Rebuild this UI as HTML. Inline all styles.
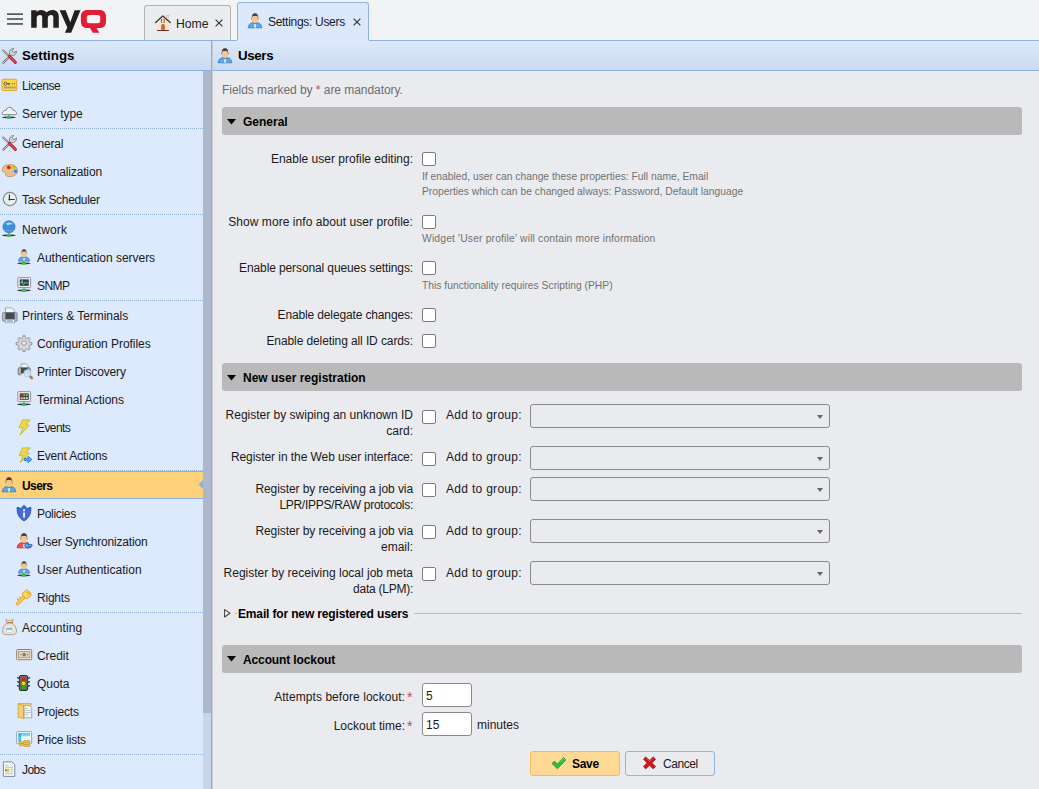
<!DOCTYPE html><html><head><meta charset="utf-8"><style>
*{box-sizing:border-box}
html,body{margin:0;padding:0}
body{width:1039px;height:789px;overflow:hidden;position:relative;background:#f2f3f5;font-family:"Liberation Sans",sans-serif;font-size:12px;color:#1a1a1a}
.a{position:absolute}
.t{position:absolute;white-space:nowrap;line-height:16px;font-size:12px}
.r{position:absolute;white-space:nowrap;line-height:16px;font-size:12px;text-align:right}
svg{position:absolute;overflow:visible}
.tab{position:absolute;border:1px solid #b3b3b3;border-bottom:none;border-radius:3px 3px 0 0}
.dot{position:absolute;left:0;width:203px;height:1px;background:repeating-linear-gradient(to right,#8db1e4 0 1px,transparent 1px 2px)}
.sec{position:absolute;left:222px;width:800px;height:28px;background:#b9b9b9;border-radius:3px}
.help{position:absolute;white-space:nowrap;line-height:15px;font-size:10.3px;color:#727272}
.cb{position:absolute;left:422px;width:14px;height:14px;background:#fff;border:1px solid #7b7b7b;border-radius:2px}
.sel{position:absolute;left:530px;width:300px;height:24px;border:1px solid #8a8a8a;border-radius:3px}
.sel:after{content:"";position:absolute;right:6px;top:10px;border-left:3.5px solid transparent;border-right:3.5px solid transparent;border-top:4px solid #666}
.inp{position:absolute;left:422px;width:50px;height:24px;background:#fff;border:1px solid #8a8a8a;border-radius:3px}
.ast{color:#c2455e}
</style></head><body>
<div class="a" style="left:0;top:0;width:1039px;height:40px;background:#f2f3f5"></div>
<svg width="16" height="12" viewBox="0 0 16 12" style="left:7px;top:13px"><rect x="0" y="0.3" width="16" height="1.7" fill="#575757"/><rect x="0" y="5.2" width="16" height="1.7" fill="#575757"/><rect x="0" y="10.1" width="16" height="1.7" fill="#575757"/></svg>
<svg width="120" height="40" viewBox="0 0 120 40" style="left:0px;top:0px"><path d="M31.2,27.7 V10.3 H36.6 V12.1 C37.6,10.6 39.3,9.9 41.2,9.9 C43.6,9.9 45.4,10.9 46.6,12.6 C47.9,10.8 50,9.9 52.4,9.9 C56.5,9.9 58.8,12.2 58.8,16.6 V27.7 H53.3 V17.3 C53.3,15.6 52.6,14.9 51.1,14.9 C49.3,14.9 47.8,16 47.8,18.2 V27.7 H42.2 V17.3 C42.2,15.6 41.5,14.9 40,14.9 C38.2,14.9 36.7,16 36.7,18.2 V27.7 Z" fill="#231f20"/><path d="M59.6,10.3 H65.7 L70.3,22.2 L74.6,10.3 H80.5 L71.2,32.8 H64.9 L67.3,27.6 Z" fill="#231f20"/><path fill-rule="evenodd" d="M87.5,9.9 H99.4 C103.6,9.9 106,12.3 106,16.5 V21.4 C106,25.6 103.6,28 99.4,28 H96.5 L99.4,32.8 H92.8 L90,28 H87.5 C83.3,28 80.9,25.6 80.9,21.4 V16.5 C80.9,12.3 83.3,9.9 87.5,9.9 Z M89.3,15 C87.6,15 86.8,15.8 86.8,17.5 V20.8 C86.8,22.5 87.6,23.3 89.3,23.3 H97.7 C99.4,23.3 100.2,22.5 100.2,20.8 V17.5 C100.2,15.8 99.4,15 97.7,15 Z" fill="#e31d36"/></svg>
<div class="tab" style="left:144px;top:5px;width:87px;height:36px;background:#ebecf0"></div>
<svg width="16" height="16" viewBox="0 0 16 16" style="left:155px;top:15px"><rect x="11.3" y="0.4" width="2.5" height="5" fill="#efe0cc" stroke="#c8b8a0" stroke-width="0.4"/><path d="M2.1,7.2 L7.8,1.8 L14,7.2 V15.4 H2.1 Z" fill="#f6e7d3"/><path d="M0.6,7.6 L7.8,0.9 L15.2,7.6" fill="none" stroke="#4a3434" stroke-width="1.3" stroke-linejoin="round" stroke-linecap="round"/><rect x="5.9" y="4" width="4" height="3.8" fill="#b86a2c"/><rect x="7" y="4.3" width="1.8" height="3.2" fill="#cfe8fa"/><path d="M6.1,15.4 V10.6 C6.1,8.6 9.9,8.6 9.9,10.6 V15.4 Z" fill="#c8783a"/><circle cx="9" cy="12.6" r="0.5" fill="#5a2a10"/><rect x="2.1" y="15" width="11.9" height="1" fill="#7a2a2a"/></svg>
<div class="t" style="left:176px;top:16px;font-size:12.2px;color:#1a1a1a">Home</div>
<svg width="8" height="8" viewBox="0 0 8 8" style="left:215px;top:19px"><path d="M0.6,0.6 L7.4,7.4 M7.4,0.6 L0.6,7.4" stroke="#3a3a3a" stroke-width="1.25"/></svg>
<div class="tab" style="left:237px;top:2px;width:132px;height:39px;background:#dce8fb;border-color:#8eb2e4;z-index:3"></div>
<svg width="16" height="16" viewBox="0 0 16 16" style="left:247px;top:13px;z-index:4"><path d="M1.2,14.8 C1.2,11.8 3,10.2 5.8,9.5 L8,10.8 L10.2,9.5 C13,10.2 14.8,11.8 14.8,14.8 Z" fill="#62a6e2" stroke="#3a78bc" stroke-width="0.8"/><path d="M6.6,8.2 L8,10.6 L9.4,8.2 Z" fill="#d9964f"/><rect x="7.3" y="11.2" width="1.5" height="3.4" fill="#fff"/><circle cx="4.9" cy="5.9" r="0.9" fill="#dca06a"/><circle cx="11.1" cy="5.9" r="0.9" fill="#dca06a"/><ellipse cx="8" cy="5.8" rx="3.0" ry="3.9" fill="#f3c690"/><path d="M4.9,6.2 C4.3,2 5.8,0.2 8,0.2 C10.2,0.2 11.7,2 11.1,6.2 C10.9,4.4 10.4,3 9.6,2.8 C8.8,3.2 7,3.2 6.4,2.8 C5.6,3 5.1,4.4 4.9,6.2 Z" fill="#4b3a35"/></svg>
<div class="t" style="left:268px;top:14px;color:#1a1a1a;z-index:4;letter-spacing:-0.3px">Settings: Users</div>
<svg width="8" height="8" viewBox="0 0 8 8" style="left:353px;top:18px;z-index:4"><path d="M0.6,0.6 L7.4,7.4 M7.4,0.6 L0.6,7.4" stroke="#3a3a3a" stroke-width="1.25"/></svg>
<div class="a" style="left:0;top:40px;width:1039px;height:31px;border-top:1px solid #8ab0e6;border-bottom:1px solid #8ab0e6;background:linear-gradient(#dde9fb,#c9daf2);z-index:2"></div>
<div class="a" style="left:237px;top:40px;width:132px;height:1px;background:#dde9fb;z-index:3"></div>
<div class="a" style="left:238px;top:40px;width:130px;height:1px;background:#dde9fb;z-index:3"></div>
<svg width="16" height="16" viewBox="0 0 16 16" style="left:1px;top:48px;z-index:4"><path d="M2.2,2.6 L8.6,8.8" stroke="#7a7a7a" stroke-width="2.1" stroke-linecap="round"/><path d="M2.2,2.6 L8.6,8.8" stroke="#e6e6e6" stroke-width="0.8" stroke-linecap="round" stroke-dasharray="0.8 0.8"/><path d="M2.4,14.6 L10,7" stroke="#7a7a7a" stroke-width="2.2" stroke-linecap="round"/><path d="M2.4,14.6 L10,7" stroke="#e6e6e6" stroke-width="0.8" stroke-linecap="round" stroke-dasharray="0.8 0.8"/><path d="M9,7.2 C7.6,4.6 9,0.4 12.6,0.5 L11,2.8 L12.8,4.8 L15.4,2.9 C15.8,6.6 12.2,8.6 9,7.2 Z" fill="#d4d4d4" stroke="#7a7a7a" stroke-width="0.9"/><path d="M8.4,8.4 L14.4,14.4" stroke="#b0202a" stroke-width="2.9" stroke-linecap="round"/><path d="M8.4,8.4 L14.4,14.4" stroke="#e8505a" stroke-width="1.3" stroke-linecap="round"/></svg>
<div class="t" style="left:22px;top:48px;font-size:13.3px;font-weight:bold;color:#000;z-index:4">Settings</div>
<svg width="16" height="16" viewBox="0 0 16 16" style="left:217px;top:48px;z-index:4"><path d="M1.2,14.8 C1.2,11.8 3,10.2 5.8,9.5 L8,10.8 L10.2,9.5 C13,10.2 14.8,11.8 14.8,14.8 Z" fill="#62a6e2" stroke="#3a78bc" stroke-width="0.8"/><path d="M6.6,8.2 L8,10.6 L9.4,8.2 Z" fill="#d9964f"/><rect x="7.3" y="11.2" width="1.5" height="3.4" fill="#fff"/><circle cx="4.9" cy="5.9" r="0.9" fill="#dca06a"/><circle cx="11.1" cy="5.9" r="0.9" fill="#dca06a"/><ellipse cx="8" cy="5.8" rx="3.0" ry="3.9" fill="#f3c690"/><path d="M4.9,6.2 C4.3,2 5.8,0.2 8,0.2 C10.2,0.2 11.7,2 11.1,6.2 C10.9,4.4 10.4,3 9.6,2.8 C8.8,3.2 7,3.2 6.4,2.8 C5.6,3 5.1,4.4 4.9,6.2 Z" fill="#4b3a35"/></svg>
<div class="t" style="left:238px;top:48px;font-size:13.3px;font-weight:bold;color:#000;z-index:4;letter-spacing:-0.35px">Users</div>
<div class="a" style="left:211px;top:40px;width:1px;height:749px;background:#8ab0e6;z-index:5"></div>
<div class="a" style="left:212px;top:41px;width:1px;height:748px;background:#c9cbd0;z-index:5"></div>
<div class="a" style="left:0;top:71px;width:211px;height:718px;background:#dde9fc"></div>
<div class="a" style="left:203px;top:71px;width:8px;height:718px;background:#c8d6ea"></div>
<div class="a" style="left:203px;top:71px;width:8px;height:642px;background:#adb8ca"></div>
<svg width="16" height="16" viewBox="0 0 16 16" style="left:1px;top:77px"><rect x="1.0" y="2.2" width="14.8" height="11.4" rx="1.2" fill="#fcd83e" stroke="#e09e26" stroke-width="0.9"/><circle cx="4.5" cy="6.7" r="1.5" fill="none" stroke="#5a5a5a" stroke-width="1"/><rect x="5.8" y="6.2" width="3.4" height="1" fill="#5a5a5a"/><rect x="7.4" y="6.2" width="1" height="2" fill="#5a5a5a"/><rect x="11" y="6.2" width="1.1" height="1.1" fill="#666"/><rect x="13" y="6.2" width="1.1" height="1.1" fill="#666"/><path d="M3.3,9.6 h1v1.8h-1z M5.4,9.6 h1v1.8h-1z M7.4,9.6 h1v1.8h-1z M9.4,9.6 h1v1.8h-1z M11.4,9.6 h1v1.8h-1z M13.3,9.6 h1v1.8h-1z" fill="#707070"/></svg>
<div class="t" style="left:22px;top:78px;color:#1a1a1a;letter-spacing:-0.44px">License</div>
<svg width="16" height="16" viewBox="0 0 16 16" style="left:1px;top:105px"><path d="M2.4,9.7 C1,9.7 0.6,7.4 2.2,6.8 C2.6,5.6 3.8,5.2 5,5.6 C5.5,3.2 7,2.2 8.8,2.3 C10.6,2.5 11.6,3.8 11.8,5.1 C13,5 14.6,5.8 14.9,7.2 C16,7.6 16,9.7 14.6,9.7 Z" fill="#f3f2f7" stroke="#7f7f94" stroke-width="1"/><ellipse cx="7.9" cy="12.4" rx="6.8" ry="0.9" fill="#1e1e1e" opacity="0.9"/><rect x="7.300000000000001" y="9.8" width="1.2" height="2.2" fill="#777"/><ellipse cx="7.9" cy="12.4" rx="2.1" ry="1.5" fill="#2fc43e"/></svg>
<div class="t" style="left:22px;top:106px;color:#1a1a1a;letter-spacing:-0.07px">Server type</div>
<div class="dot" style="top:128px"></div>
<svg width="16" height="16" viewBox="0 0 16 16" style="left:1px;top:135px"><path d="M2.2,2.6 L8.6,8.8" stroke="#7a7a7a" stroke-width="2.1" stroke-linecap="round"/><path d="M2.2,2.6 L8.6,8.8" stroke="#e6e6e6" stroke-width="0.8" stroke-linecap="round" stroke-dasharray="0.8 0.8"/><path d="M2.4,14.6 L10,7" stroke="#7a7a7a" stroke-width="2.2" stroke-linecap="round"/><path d="M2.4,14.6 L10,7" stroke="#e6e6e6" stroke-width="0.8" stroke-linecap="round" stroke-dasharray="0.8 0.8"/><path d="M9,7.2 C7.6,4.6 9,0.4 12.6,0.5 L11,2.8 L12.8,4.8 L15.4,2.9 C15.8,6.6 12.2,8.6 9,7.2 Z" fill="#d4d4d4" stroke="#7a7a7a" stroke-width="0.9"/><path d="M8.4,8.4 L14.4,14.4" stroke="#b0202a" stroke-width="2.9" stroke-linecap="round"/><path d="M8.4,8.4 L14.4,14.4" stroke="#e8505a" stroke-width="1.3" stroke-linecap="round"/></svg>
<div class="t" style="left:22px;top:136px;color:#1a1a1a;letter-spacing:-0.21px">General</div>
<svg width="16" height="16" viewBox="0 0 16 16" style="left:1px;top:163px"><path d="M1.3,6.4 C1.3,3 5,1.6 9,1.6 C13.2,1.6 16.2,3.6 16.2,7.6 C16.2,11.2 13.6,13.6 8.6,13.6 C5.6,13.6 4.2,12.6 4.6,10.6 C4.9,9.2 4,8.8 3,9 C1.8,9.2 1.3,8.2 1.3,6.4 Z" fill="#ebc088" stroke="#bd8a52" stroke-width="0.8"/><circle cx="7.8" cy="4.4" r="1.9" fill="#d8232c"/><circle cx="12.8" cy="4.3" r="1.9" fill="#c7bb26"/><circle cx="14.6" cy="8.2" r="1.8" fill="#3b86d6"/><circle cx="9.6" cy="10.4" r="0.9" fill="#f4f8ff" stroke="#b8895a" stroke-width="0.5"/></svg>
<div class="t" style="left:22px;top:164px;color:#1a1a1a;letter-spacing:-0.14px">Personalization</div>
<svg width="16" height="16" viewBox="0 0 16 16" style="left:1px;top:191px"><circle cx="8.9" cy="8" r="6.6" fill="#e8f1ef" stroke="#858890" stroke-width="1.2"/><path d="M8.4,3.4 V8.5 H13.6" fill="none" stroke="#2e2e2e" stroke-width="1.1"/><circle cx="8.4" cy="8.5" r="0.9" fill="#2e2e2e"/></svg>
<div class="t" style="left:22px;top:192px;color:#1a1a1a;letter-spacing:-0.32px">Task Scheduler</div>
<div class="dot" style="top:214px"></div>
<svg width="16" height="16" viewBox="0 0 16 16" style="left:1px;top:221px"><circle cx="8" cy="5.8" r="6" fill="#3d8fdc" stroke="#2c6dba" stroke-width="0.7"/><path d="M4.8,2.3 C7,0.8 10.2,1.2 12,3 C10.3,3.6 8.2,3.2 6.5,4.2 Z" fill="#b8e8fb" opacity="0.9"/><path d="M3,8.2 C5,10.8 11,10.8 13,8.2 C11,9.6 5,9.6 3,8.2 Z" fill="#7ac0f4" opacity="0.6"/><ellipse cx="7.9" cy="14.4" rx="6.8" ry="0.9" fill="#1e1e1e" opacity="0.9"/><rect x="7.300000000000001" y="11.8" width="1.2" height="2.2" fill="#777"/><ellipse cx="7.9" cy="14.4" rx="2.1" ry="1.5" fill="#2fc43e"/></svg>
<div class="t" style="left:22px;top:222px;color:#1a1a1a;letter-spacing:0.17px">Network</div>
<svg width="16" height="16" viewBox="0 0 16 16" style="left:16px;top:249px"><g transform="translate(1.4400000000000004,0) scale(0.82)"><path d="M1.2,14.8 C1.2,11.8 3,10.2 5.8,9.5 L8,10.8 L10.2,9.5 C13,10.2 14.8,11.8 14.8,14.8 Z" fill="#62a6e2" stroke="#3a78bc" stroke-width="0.8"/><path d="M6.6,8.2 L8,10.6 L9.4,8.2 Z" fill="#d9964f"/><rect x="7.3" y="11.2" width="1.5" height="3.4" fill="#fff"/><circle cx="4.9" cy="5.9" r="0.9" fill="#dca06a"/><circle cx="11.1" cy="5.9" r="0.9" fill="#dca06a"/><ellipse cx="8" cy="5.8" rx="3.0" ry="3.9" fill="#f3c690"/><path d="M4.9,6.2 C4.3,2 5.8,0.2 8,0.2 C10.2,0.2 11.7,2 11.1,6.2 C10.9,4.4 10.4,3 9.6,2.8 C8.8,3.2 7,3.2 6.4,2.8 C5.6,3 5.1,4.4 4.9,6.2 Z" fill="#4b3a35"/></g><ellipse cx="7.9" cy="14.3" rx="6.8" ry="0.9" fill="#1e1e1e" opacity="0.9"/><rect x="7.300000000000001" y="11.700000000000001" width="1.2" height="2.2" fill="#777"/><ellipse cx="7.9" cy="14.3" rx="2.1" ry="1.5" fill="#2fc43e"/></svg>
<div class="t" style="left:37px;top:250px;color:#1a1a1a;letter-spacing:-0.03px">Authentication servers</div>
<svg width="16" height="16" viewBox="0 0 16 16" style="left:16px;top:277px"><rect x="1.8" y="0.6" width="12.8" height="10" rx="0.8" fill="#ececec" stroke="#8f949c" stroke-width="1"/><rect x="3.8" y="2.4" width="9" height="6.4" fill="#3a3a44"/><path d="M4.2,6 L5.5,5.6 L6.2,3.4 L6.8,6.8 L7.8,7.4 L9.3,5 L10.6,5.8 L12,6.2" fill="none" stroke="#5fe0b0" stroke-width="0.9"/><ellipse cx="8" cy="13.4" rx="6.8" ry="0.9" fill="#1e1e1e" opacity="0.9"/><rect x="7.4" y="10.8" width="1.2" height="2.2" fill="#777"/><ellipse cx="8" cy="13.4" rx="2.1" ry="1.5" fill="#2fc43e"/></svg>
<div class="t" style="left:37px;top:278px;color:#1a1a1a;letter-spacing:-0.55px">SNMP</div>
<div class="dot" style="top:300px"></div>
<svg width="16" height="16" viewBox="0 0 16 16" style="left:1px;top:307px"><path d="M4.4,0.8 H10.5 L13.6,3.6 V7 H4.4 Z" fill="#eef7f6" stroke="#8a9aa0" stroke-width="0.8"/><rect x="1.6" y="5.6" width="14.5" height="8.6" rx="1" fill="#b9b9c4" stroke="#7a7a80" stroke-width="0.8"/><rect x="4.4" y="5.6" width="9.3" height="6.4" fill="#4a4a52"/><rect x="4.4" y="12.6" width="9.3" height="3.2" fill="#fff" stroke="#8a9aa0" stroke-width="0.7"/><rect x="5.8" y="13.5" width="6" height="1" fill="#2a7bd6"/><circle cx="14.6" cy="10.4" r="0.9" fill="#3de04a"/></svg>
<div class="t" style="left:22px;top:308px;color:#1a1a1a;letter-spacing:-0.05px">Printers &amp; Terminals</div>
<svg width="16" height="16" viewBox="0 0 16 16" style="left:16px;top:335px"><g transform="translate(0,-0.9)"><path d="M7,1.6 h2 l0.4,2.1 1.7,0.8 1.8,-1.2 1.4,1.4 -1.2,1.8 0.8,1.7 2.1,0.4 v2 l-2.1,0.4 -0.8,1.7 1.2,1.8 -1.4,1.4 -1.8,-1.2 -1.7,0.8 -0.4,2.1 h-2 l-0.4,-2.1 -1.7,-0.8 -1.8,1.2 -1.4,-1.4 1.2,-1.8 -0.8,-1.7 -2.1,-0.4 v-2 l2.1,-0.4 0.8,-1.7 -1.2,-1.8 1.4,-1.4 1.8,1.2 1.7,-0.8 Z" fill="#d6d6d6" stroke="#858585" stroke-width="0.8"/><circle cx="8" cy="8.9" r="2.3" fill="#dce9fb" stroke="#8a8a8a" stroke-width="0.8"/></g></svg>
<div class="t" style="left:37px;top:336px;color:#1a1a1a;letter-spacing:-0.05px">Configuration Profiles</div>
<svg width="16" height="16" viewBox="0 0 16 16" style="left:16px;top:363px"><path d="M5,0.8 H10 L12,2.8 V5.5 H5 Z" fill="#eef7f6" stroke="#8a9aa0" stroke-width="0.8"/><rect x="2.2" y="4.8" width="12" height="7" rx="0.8" fill="#b0b0ba" stroke="#6a6a6a" stroke-width="0.8"/><rect x="5" y="4.8" width="6.5" height="5.6" fill="#484850"/><rect x="5.3" y="11" width="5.5" height="1.5" fill="#fff"/><path d="M13.6,12.8 L15.8,15" stroke="#b47a38" stroke-width="2.6" stroke-linecap="round"/><circle cx="11.3" cy="10.3" r="3.6" fill="#cfe2f8" stroke="#a8c6ea" stroke-width="0.8" opacity="0.95"/></svg>
<div class="t" style="left:37px;top:364px;color:#1a1a1a;letter-spacing:-0.15px">Printer Discovery</div>
<svg width="16" height="16" viewBox="0 0 16 16" style="left:16px;top:391px"><rect x="1.8" y="0.6" width="12.8" height="10" rx="0.8" fill="#ececec" stroke="#8f949c" stroke-width="1"/><rect x="3.8" y="2.4" width="9" height="6.4" fill="#34343c"/><rect x="4.7" y="3.2" width="2" height="2" fill="#f20"/><rect x="7.3" y="3.2" width="2" height="2" fill="#f80"/><rect x="9.9" y="3.2" width="2" height="2" fill="#0e6"/><rect x="4.7" y="6.1" width="2" height="2" fill="#ccc"/><rect x="7.3" y="6.1" width="2" height="2" fill="#ccc"/><rect x="9.9" y="6.1" width="2" height="2" fill="#ccc"/><ellipse cx="8" cy="13.4" rx="6.8" ry="0.9" fill="#1e1e1e" opacity="0.9"/><rect x="7.4" y="10.8" width="1.2" height="2.2" fill="#777"/><ellipse cx="8" cy="13.4" rx="2.1" ry="1.5" fill="#2fc43e"/></svg>
<div class="t" style="left:37px;top:392px;color:#1a1a1a;letter-spacing:-0.03px">Terminal Actions</div>
<svg width="16" height="16" viewBox="0 0 16 16" style="left:16px;top:419px"><path d="M6.4,0.9 L14.2,0.9 L10,5.6 L13.2,6.2 L4.3,15.7 L7.1,8.7 L3.1,8.7 Z" fill="#ecd84c" stroke="#c6ae22" stroke-width="0.8" stroke-linejoin="round"/></svg>
<div class="t" style="left:37px;top:420px;color:#1a1a1a;letter-spacing:-0.57px">Events</div>
<svg width="16" height="16" viewBox="0 0 16 16" style="left:16px;top:447px"><path d="M6.4,0.9 L14.2,0.9 L10,5.6 L13.2,6.2 L4.3,15.7 L7.1,8.7 L3.1,8.7 Z" fill="#ecd84c" stroke="#c6ae22" stroke-width="0.8" stroke-linejoin="round"/><path d="M8.3,11.3 H12 V9.3 L15.9,12.5 L12,15.7 V13.7 H8.3 Z" fill="#46b2f2" stroke="#2a6fc8" stroke-width="0.8" stroke-linejoin="round"/></svg>
<div class="t" style="left:37px;top:448px;color:#1a1a1a;letter-spacing:-0.19px">Event Actions</div>
<div class="dot" style="top:470px"></div>
<div class="a" style="left:0;top:471px;width:203px;height:28px;background:#fdd07a;border-top:1px solid #8cb0e4;border-bottom:1px solid #8cb0e4"></div>
<svg width="5" height="9" style="left:198px;top:480px"><path d="M5,0 L0.5,4.5 L5,9 Z" fill="#8cb0e4"/></svg>
<svg width="16" height="16" viewBox="0 0 16 16" style="left:1px;top:477px"><path d="M1.2,14.8 C1.2,11.8 3,10.2 5.8,9.5 L8,10.8 L10.2,9.5 C13,10.2 14.8,11.8 14.8,14.8 Z" fill="#62a6e2" stroke="#3a78bc" stroke-width="0.8"/><path d="M6.6,8.2 L8,10.6 L9.4,8.2 Z" fill="#d9964f"/><rect x="7.3" y="11.2" width="1.5" height="3.4" fill="#fff"/><circle cx="4.9" cy="5.9" r="0.9" fill="#dca06a"/><circle cx="11.1" cy="5.9" r="0.9" fill="#dca06a"/><ellipse cx="8" cy="5.8" rx="3.0" ry="3.9" fill="#f3c690"/><path d="M4.9,6.2 C4.3,2 5.8,0.2 8,0.2 C10.2,0.2 11.7,2 11.1,6.2 C10.9,4.4 10.4,3 9.6,2.8 C8.8,3.2 7,3.2 6.4,2.8 C5.6,3 5.1,4.4 4.9,6.2 Z" fill="#4b3a35"/></svg>
<div class="t" style="left:22px;top:478px;font-weight:bold;color:#000;letter-spacing:-0.6px">Users</div>
<svg width="16" height="16" viewBox="0 0 16 16" style="left:16px;top:505px"><path d="M1.2,2.3 L5,3.6 L8,0.3 L11,3.6 L14.8,2.3 C15.2,8.6 12.8,13.4 8,15.7 C3.2,13.4 0.8,8.6 1.2,2.3 Z" fill="#3f6fde" stroke="#2443a8" stroke-width="0.9" stroke-linejoin="round"/><rect x="7.1" y="4.3" width="1.9" height="1.9" fill="#fff"/><rect x="7.1" y="7.4" width="1.9" height="5.2" fill="#f4ecd8"/></svg>
<div class="t" style="left:37px;top:506px;color:#1a1a1a;letter-spacing:-0.31px">Policies</div>
<svg width="16" height="16" viewBox="0 0 16 16" style="left:16px;top:533px"><path d="M1.2,14.8 C1.2,11.8 3,10.2 5.8,9.5 L8,10.8 L10.2,9.5 C13,10.2 14.8,11.8 14.8,14.8 Z" fill="#e5545b" stroke="#c02a30" stroke-width="0.8"/><path d="M6.6,8.2 L8,10.6 L9.4,8.2 Z" fill="#d9964f"/><rect x="7.3" y="11.2" width="1.5" height="3.4" fill="#fff"/><circle cx="4.9" cy="5.9" r="0.9" fill="#dca06a"/><circle cx="11.1" cy="5.9" r="0.9" fill="#dca06a"/><ellipse cx="8" cy="5.8" rx="3.0" ry="3.9" fill="#f3c690"/><path d="M4.9,6.2 C4.3,2 5.8,0.2 8,0.2 C10.2,0.2 11.7,2 11.1,6.2 C10.9,4.4 10.4,3 9.6,2.8 C8.8,3.2 7,3.2 6.4,2.8 C5.6,3 5.1,4.4 4.9,6.2 Z" fill="#4b3a35"/><path d="M16,11.5 H12 V9.4 L8.2,12.5 L12,15.6 V13.5 H16 Z" fill="#42b4f4" stroke="#2a6fc8" stroke-width="0.8" stroke-linejoin="round"/></svg>
<div class="t" style="left:37px;top:534px;color:#1a1a1a;letter-spacing:-0.18px">User Synchronization</div>
<svg width="16" height="16" viewBox="0 0 16 16" style="left:16px;top:561px"><g transform="translate(1.4400000000000004,0) scale(0.82)"><path d="M1.2,14.8 C1.2,11.8 3,10.2 5.8,9.5 L8,10.8 L10.2,9.5 C13,10.2 14.8,11.8 14.8,14.8 Z" fill="#62a6e2" stroke="#3a78bc" stroke-width="0.8"/><path d="M6.6,8.2 L8,10.6 L9.4,8.2 Z" fill="#d9964f"/><rect x="7.3" y="11.2" width="1.5" height="3.4" fill="#fff"/><circle cx="4.9" cy="5.9" r="0.9" fill="#dca06a"/><circle cx="11.1" cy="5.9" r="0.9" fill="#dca06a"/><ellipse cx="8" cy="5.8" rx="3.0" ry="3.9" fill="#f3c690"/><path d="M4.9,6.2 C4.3,2 5.8,0.2 8,0.2 C10.2,0.2 11.7,2 11.1,6.2 C10.9,4.4 10.4,3 9.6,2.8 C8.8,3.2 7,3.2 6.4,2.8 C5.6,3 5.1,4.4 4.9,6.2 Z" fill="#4b3a35"/></g><ellipse cx="7.9" cy="14.3" rx="6.8" ry="0.9" fill="#1e1e1e" opacity="0.9"/><rect x="7.300000000000001" y="11.700000000000001" width="1.2" height="2.2" fill="#777"/><ellipse cx="7.9" cy="14.3" rx="2.1" ry="1.5" fill="#2fc43e"/></svg>
<div class="t" style="left:37px;top:562px;color:#1a1a1a;letter-spacing:0.03px">User Authentication</div>
<svg width="16" height="16" viewBox="0 0 16 16" style="left:16px;top:589px"><path d="M8.8,7.4 L1.6,14.6" stroke="#e39a28" stroke-width="3.3" stroke-linecap="round"/><path d="M8.8,7.4 L1.6,14.6" stroke="#f8d650" stroke-width="1.7" stroke-linecap="round"/><path d="M2.9,11 L1.3,9.6 M4.9,9 L3.5,7.7" stroke="#e39a28" stroke-width="1.5"/><path d="M2.9,11 L1.9,10.1 M4.9,9 L4.1,8.3" stroke="#f8d650" stroke-width="0.6"/><rect x="7" y="1.7" width="7.4" height="7.4" rx="2.3" transform="rotate(45 10.7 5.4)" fill="#f8d650" stroke="#e39a28" stroke-width="0.9"/><path d="M11.4,3.1 L13.3,5" stroke="#e39a28" stroke-width="1.1" stroke-linecap="round"/></svg>
<div class="t" style="left:37px;top:590px;color:#1a1a1a;letter-spacing:-0.22px">Rights</div>
<div class="dot" style="top:612px"></div>
<svg width="16" height="16" viewBox="0 0 16 16" style="left:1px;top:619px"><path d="M4.8,0.6 C6,1.6 7.4,0.8 8.4,1.8 C9.4,0.8 11,1.6 12.4,0.6 L10.6,4 C14,5.8 15.9,9.3 15.3,13.2 C14.9,15.2 13.2,15.7 8.5,15.7 C3.8,15.7 2.1,15.2 1.7,13.2 C1.1,9.3 3,5.8 6.4,4 Z" fill="#efe4d4" stroke="#9a8a78" stroke-width="0.8"/><path d="M6,3.7 H12" stroke="#b66a2a" stroke-width="1.2"/><rect x="5.6" y="9.4" width="5.4" height="4.2" fill="#e8f6fb" stroke="#b5c8cc" stroke-width="0.5"/><rect x="5.6" y="9.4" width="5.4" height="1.1" fill="#2ea0ea"/></svg>
<div class="t" style="left:22px;top:620px;color:#1a1a1a;letter-spacing:0.09px">Accounting</div>
<svg width="16" height="16" viewBox="0 0 16 16" style="left:16px;top:647px"><rect x="0.7" y="2.5" width="15" height="10.2" rx="0.8" fill="#f2eadc" stroke="#8f7f70" stroke-width="1"/><rect x="2.6" y="4.4" width="11.2" height="6.4" fill="#ded2c0" stroke="#9b8b7a" stroke-width="0.7"/><circle cx="5" cy="7.6" r="0.6" fill="#7d6d5d"/><circle cx="11.4" cy="7.6" r="0.6" fill="#7d6d5d"/><ellipse cx="8.2" cy="7.6" rx="1.8" ry="1.9" fill="#8a7a6a"/></svg>
<div class="t" style="left:37px;top:648px;color:#1a1a1a;letter-spacing:-0.05px">Credit</div>
<svg width="16" height="16" viewBox="0 0 16 16" style="left:16px;top:675px"><path d="M1,2.5 L3.5,3.5 M1,6.5 L3.5,7.5 M1,10.5 L3.5,11.5 M14,2.5 L11.5,3.5 M14,6.5 L11.5,7.5 M14,10.5 L11.5,11.5" stroke="#222" stroke-width="1.3"/><rect x="3.3" y="0.5" width="8.4" height="15" rx="1.6" fill="#6a6a6a" stroke="#1e1e1e" stroke-width="0.9"/><circle cx="7.5" cy="4.3" r="1.8" fill="#e8180a"/><circle cx="7.5" cy="8.4" r="1.8" fill="#f0dc08"/><circle cx="7.5" cy="12.4" r="1.8" fill="#1cb01c"/></svg>
<div class="t" style="left:37px;top:676px;color:#1a1a1a;letter-spacing:-0.06px">Quota</div>
<svg width="16" height="16" viewBox="0 0 16 16" style="left:16px;top:703px"><path d="M7.8,2.4 H13.4 L15.7,4.6 V14.8 H7.8 Z" fill="#eef6f7" stroke="#8a9aa4" stroke-width="0.8"/><path d="M8.6,5.5 H12 M8.6,7.5 H14.6 M8.6,9.5 H14.6 M8.6,11.5 H12" stroke="#9aa6ac" stroke-width="0.6"/><path d="M2,0.5 H15.2 V2.6 H7.8 V15.7 L2,14.2 Z" fill="#f2cf70" stroke="#d4a444" stroke-width="0.8"/><path d="M2.2,1 L7.6,2.6 V15.4" fill="none" stroke="#c89a3a" stroke-width="0.7"/></svg>
<div class="t" style="left:37px;top:704px;color:#1a1a1a;letter-spacing:-0.21px">Projects</div>
<svg width="16" height="16" viewBox="0 0 16 16" style="left:16px;top:731px"><rect x="0.6" y="0.6" width="15" height="12" rx="0.6" fill="#f4fbff" stroke="#8ea0aa" stroke-width="0.9"/><rect x="2.4" y="2.3" width="11.6" height="8.6" fill="#d6eef8"/><rect x="2.4" y="2.3" width="11.6" height="2.2" fill="#34b2f2"/><rect x="2.4" y="2.3" width="2.6" height="8.6" fill="#34b2f2"/><path d="M5.8,6.2 h2.2 v1.1 h-2.2z M8.8,6.2 h2.2 v1.1 h-2.2z M11.6,6.2 h2 v1.1 h-2z M5.8,8.3 h2.2 v1.1 h-2.2z M8.8,8.3 h2.2 v1.1 h-2.2z M11.6,8.3 h2 v1.1 h-2z" fill="#ffffff"/><path d="M5.8,3.1 h2 v0.8 h-2z M8.8,3.1 h2 v0.8 h-2z M11.6,3.1 h2 v0.8 h-2z M3.2,6.3 h1 v0.9 h-1z M3.2,8.4 h1 v0.9 h-1z" fill="#9ee4fb"/><rect x="7.6" y="9.6" width="6.6" height="1.9" rx="0.9" fill="#f2ca48" stroke="#b8922a" stroke-width="0.6"/><rect x="7.6" y="11.6" width="6.6" height="1.9" rx="0.9" fill="#f2ca48" stroke="#b8922a" stroke-width="0.6"/><rect x="7.6" y="13.6" width="6.6" height="1.9" rx="0.9" fill="#f2ca48" stroke="#b8922a" stroke-width="0.6"/><rect x="3.2" y="10.8" width="4.4" height="1.9" rx="0.9" fill="#f2ca48" stroke="#b8922a" stroke-width="0.6"/><rect x="3.2" y="12.8" width="4.4" height="1.9" rx="0.9" fill="#f2ca48" stroke="#b8922a" stroke-width="0.6"/></svg>
<div class="t" style="left:37px;top:732px;color:#1a1a1a;letter-spacing:-0.23px">Price lists</div>
<div class="dot" style="top:754px"></div>
<svg width="16" height="16" viewBox="0 0 16 16" style="left:1px;top:761px"><path d="M2.4,0.8 H10.8 L13.8,3.6 V15.4 H2.4 Z" fill="#f2f9f8" stroke="#7c8e98" stroke-width="1"/><path d="M4.2,4.2 H7.6 M4.2,6.3 H12 M9.4,8.4 H12 M9.4,10.3 H12 M4.2,12.4 H12" stroke="#aab4b8" stroke-width="0.8"/><rect x="4.2" y="7.8" width="3.9" height="3" fill="#e8b818"/><rect x="4.2" y="8.6" width="0.9" height="1.2" fill="#6a3a2a"/></svg>
<div class="t" style="left:22px;top:762px;color:#1a1a1a;letter-spacing:-0.55px">Jobs</div>
<div class="a" style="left:213px;top:71px;width:826px;height:718px;background:#eaebef"></div>
<div class="t" style="left:222px;top:82px;color:#6e6e6e;letter-spacing:-0.05px">Fields marked by <span class="ast">*</span> are mandatory.</div>
<div class="sec" style="top:107px"></div>
<svg width="9" height="6" viewBox="0 0 9 6" style="left:227px;top:118.6px"><path d="M0,0 H9 L4.5,5.4 Z" fill="#000"/></svg>
<div class="t" style="left:243px;top:114px;font-weight:bold;color:#000;letter-spacing:0px">General</div>
<div class="r" style="left:13px;width:400px;top:151px">Enable user profile editing:</div>
<div class="cb" style="top:152px"></div>
<div class="help" style="left:422px;top:169px">If enabled, user can change these properties: Full name, Email</div>
<div class="help" style="left:422px;top:184px">Properties which can be changed always: Password, Default language</div>
<div class="r" style="left:13px;width:400px;top:214px;letter-spacing:0.06px">Show more info about user profile:</div>
<div class="cb" style="top:215px"></div>
<div class="help" style="left:422px;top:231px;letter-spacing:0.17px">Widget 'User profile' will contain more information</div>
<div class="r" style="left:13px;width:400px;top:260px;letter-spacing:-0.11px">Enable personal queues settings:</div>
<div class="cb" style="top:261px"></div>
<div class="help" style="left:422px;top:278px">This functionality requires Scripting (PHP)</div>
<div class="r" style="left:13px;width:400px;top:307px;letter-spacing:-0.14px">Enable delegate changes:</div>
<div class="cb" style="top:308px"></div>
<div class="r" style="left:13px;width:400px;top:333px;letter-spacing:-0.1px">Enable deleting all ID cards:</div>
<div class="cb" style="top:334px"></div>
<div class="sec" style="top:363px"></div>
<svg width="9" height="6" viewBox="0 0 9 6" style="left:227px;top:374.6px"><path d="M0,0 H9 L4.5,5.4 Z" fill="#000"/></svg>
<div class="t" style="left:243px;top:370px;font-weight:bold;color:#000;letter-spacing:0px">New user registration</div>
<div class="r" style="left:13px;width:400px;top:407px;letter-spacing:0px">Register by swiping an unknown ID</div>
<div class="r" style="left:13px;width:400px;top:423px;letter-spacing:0px">card:</div>
<div class="cb" style="top:410px"></div>
<div class="t" style="left:446px;top:407px;letter-spacing:0.3px">Add to group:</div>
<div class="sel" style="top:404px"></div>
<div class="r" style="left:13px;width:400px;top:449px;letter-spacing:-0.07px">Register in the Web user interface:</div>
<div class="cb" style="top:452px"></div>
<div class="t" style="left:446px;top:449px;letter-spacing:0.3px">Add to group:</div>
<div class="sel" style="top:446px"></div>
<div class="r" style="left:13px;width:400px;top:481px;letter-spacing:-0.08px">Register by receiving a job via</div>
<div class="r" style="left:13px;width:400px;top:497px;letter-spacing:-0.29px">LPR/IPPS/RAW protocols:</div>
<div class="cb" style="top:483px"></div>
<div class="t" style="left:446px;top:481px;letter-spacing:0.3px">Add to group:</div>
<div class="sel" style="top:477px"></div>
<div class="r" style="left:13px;width:400px;top:523px;letter-spacing:-0.08px">Register by receiving a job via</div>
<div class="r" style="left:13px;width:400px;top:539px;letter-spacing:0px">email:</div>
<div class="cb" style="top:525px"></div>
<div class="t" style="left:446px;top:523px;letter-spacing:0.3px">Add to group:</div>
<div class="sel" style="top:519px"></div>
<div class="r" style="left:13px;width:400px;top:565px;letter-spacing:0px">Register by receiving local job meta</div>
<div class="r" style="left:13px;width:400px;top:581px;letter-spacing:-0.25px">data (LPM):</div>
<div class="cb" style="top:567px"></div>
<div class="t" style="left:446px;top:565px;letter-spacing:0.3px">Add to group:</div>
<div class="sel" style="top:561px"></div>
<svg width="7" height="9" viewBox="0 0 7 9" style="left:224px;top:609px"><path d="M0.6,0.6 L5.9,4.3 L0.6,8 Z" fill="#fff" stroke="#444" stroke-width="1.1" stroke-linejoin="round"/></svg>
<div class="a" style="left:235px;top:613px;width:2px;height:1px;background:#b8b8b8"></div>
<div class="t" style="left:238px;top:606px;font-weight:bold;color:#000;letter-spacing:-0.15px">Email for new registered users</div>
<div class="a" style="left:414px;top:613px;width:608px;height:1px;background:#b8b8b8"></div>
<div class="sec" style="top:645px"></div>
<svg width="9" height="6" viewBox="0 0 9 6" style="left:227px;top:655.6px"><path d="M0,0 H9 L4.5,5.4 Z" fill="#000"/></svg>
<div class="t" style="left:243px;top:652px;font-weight:bold;color:#000;letter-spacing:-0.12px">Account lockout</div>
<div class="r" style="left:5px;width:400px;top:689px;letter-spacing:0.06px">Attempts before lockout:</div>
<div class="t" style="left:407px;top:689px"><span class="ast" style="font-size:14px">*</span></div>
<div class="inp" style="top:683px"></div>
<div class="t" style="left:426px;top:688px">5</div>
<div class="r" style="left:5px;width:400px;top:718px">Lockout time:</div>
<div class="t" style="left:407px;top:718px"><span class="ast" style="font-size:14px">*</span></div>
<div class="inp" style="top:712px"></div>
<div class="t" style="left:426px;top:717px">15</div>
<div class="t" style="left:477px;top:717px">minutes</div>
<div class="a" style="left:530px;top:751px;width:90px;height:25px;background:#fdd995;border:1px solid #f7b955;border-radius:3px"></div>
<svg width="16" height="13" viewBox="0 0 16 13" style="left:551px;top:757px"><path d="M1,6.5 L3.4,4.1 L6.4,7.2 L12.5,0.6 L14.8,3 L6.4,11.7 Z" fill="#2bc23a" stroke="#138a22" stroke-width="0.7" stroke-linejoin="round"/><path d="M9.5,4.8 L12.6,1.6 L13.8,2.9" fill="none" stroke="#7ae884" stroke-width="0.8" opacity="0.8"/></svg>
<div class="t" style="left:572px;top:756px;font-weight:bold;color:#000;letter-spacing:-0.3px">Save</div>
<div class="a" style="left:625px;top:751px;width:90px;height:25px;border:1px solid #8fb4e6;border-radius:3px"></div>
<svg width="13" height="14" viewBox="0 0 13 14" style="left:643px;top:756px"><path d="M2.8,0.8 L6.5,4.3 L10.2,0.8 L12.6,3.2 L9,6.9 L12.6,10.5 L10.2,12.9 L6.5,9.3 L2.8,12.9 L0.4,10.5 L4,6.9 L0.4,3.2 Z" fill="#d0141a" stroke="#9a0a10" stroke-width="0.6" stroke-linejoin="round"/><path d="M2.8,1.8 L6.5,5.3 L10.2,1.8" fill="none" stroke="#f07070" stroke-width="0.9" opacity="0.7"/></svg>
<div class="t" style="left:663px;top:756px;color:#1a1a1a;letter-spacing:-0.45px">Cancel</div>
</body></html>
